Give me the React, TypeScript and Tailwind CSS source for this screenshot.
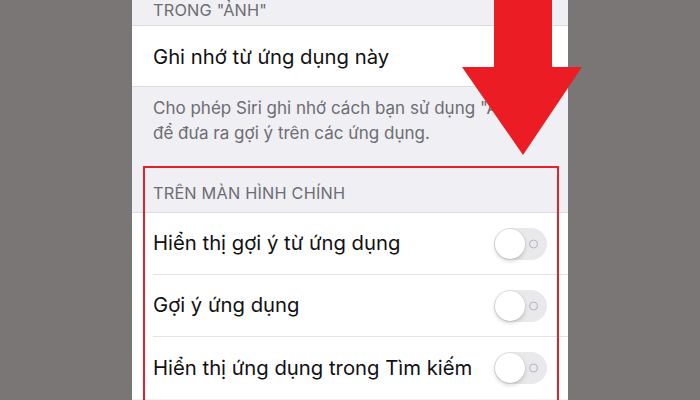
import React from 'react';

interface ToggleRow {
  label: string;
  on: boolean;
}

const HOME_ROWS: ToggleRow[] = [
  { label: 'Hiển thị gợi ý từ ứng dụng', on: false },
  { label: 'Gợi ý ứng dụng', on: false },
  { label: 'Hiển thị ứng dụng trong Tìm kiếm', on: false },
];

// iOS style switch, drawn in the off state
const Switch: React.FC<{ on: boolean }> = ({ on }) => (
  <div className={`relative w-[53px] h-[32px] rounded-full ${on ? 'bg-[#34c759]' : 'bg-[#e9e9eb]'}`}>
    <div className="absolute right-[9px] top-1/2 -translate-y-1/2 w-[9px] h-[9px] rounded-full border-[1.5px] border-[#b5b5b8]" />
    <div className="absolute left-[1px] top-[1px] w-[30px] h-[30px] rounded-full bg-white shadow-[0_2px_4px_rgba(0,0,0,0.18),0_0_0_0.5px_rgba(0,0,0,0.06)]" />
  </div>
);

const App: React.FC = () => {
  return (
    <div
      className="relative w-[700px] h-[400px] overflow-hidden bg-[#7a7675] flex justify-center"
      style={{ fontFamily: 'Inter, "Noto Sans", sans-serif' }}
    >
      {/* Settings screen */}
      <div className="w-[436px] h-full bg-[#efeff4] flex flex-col overflow-hidden">
        <div className="h-[25px] flex items-end pl-[21px] pb-[5px]">
          <span className="text-[16.3px] leading-[20px] text-[#6d6d72] tracking-[0.2px]">TRONG "ẢNH"</span>
        </div>

        <div className="bg-white h-[62px] flex items-center pl-[21px] border-y border-[#dcdce0]">
          <span className="text-[20.3px] text-[#111] pt-[3px]">Ghi nhớ từ ứng dụng này</span>
        </div>

        <div className="pl-[21px] pt-[9px] text-[17px] leading-[25px] text-[#6d6d72] whitespace-nowrap">
          <p>Cho phép Siri ghi nhớ cách bạn sử dụng "Ảnh"</p>
          <p>để đưa ra gợi ý trên các ứng dụng.</p>
        </div>

        <div className="pl-[21px] pt-[37px] pb-[9px] text-[16.3px] leading-[20px] text-[#6d6d72] tracking-[0.2px]">
          TRÊN MÀN HÌNH CHÍNH
        </div>

        <div className="bg-white border-t border-[#dcdce0]">
          {HOME_ROWS.map((row, idx) => (
            <div key={idx} className="pl-[21px]">
              <div
                className={`h-[62px] flex items-center justify-between pr-[21px] ${
                  idx !== HOME_ROWS.length - 1 ? 'border-b border-[#e3e3e6]' : ''
                }`}
              >
                <span className="text-[20.3px] text-[#111] whitespace-nowrap">{row.label}</span>
                <Switch on={row.on} />
              </div>
            </div>
          ))}
        </div>
      </div>

      {/* Red annotation box */}
      <div className="absolute left-[143px] top-[166px] w-[416px] h-[260px] border-2 border-[#e2222b]" />

      {/* Red arrow pointing down */}
      <svg className="absolute left-0 top-0" width="700" height="400" viewBox="0 0 700 400">
        <polygon
          points="494,0 552,0 552,67 582,67 523,155 462,67 494,67"
          fill="#ec1c24"
        />
      </svg>
    </div>
  );
};

export default App;
